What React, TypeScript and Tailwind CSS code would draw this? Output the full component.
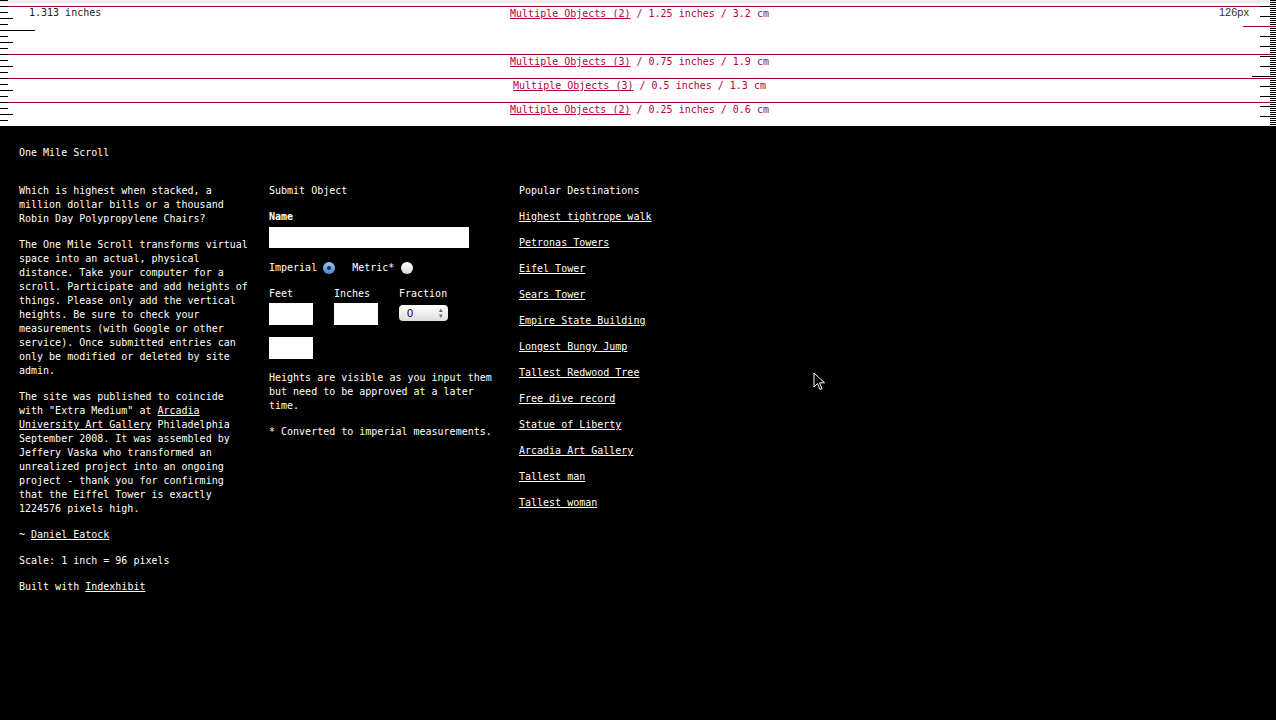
const mono = "font-['DejaVu_Sans_Mono','Liberation_Mono',monospace]";

const objects = [
  { label: 'Multiple Objects (2)', rest: ' / 1.25 inches / 3.2 cm', h: 'h-[48px]' },
  { label: 'Multiple Objects (3)', rest: ' / 0.75 inches / 1.9 cm', h: 'h-[24px]' },
  { label: 'Multiple Objects (3)', rest: ' / 0.5 inches / 1.3 cm', h: 'h-[24px]' },
  { label: 'Multiple Objects (2)', rest: ' / 0.25 inches / 0.6 cm', h: 'h-[24px]' },
];

const destinations = [
  'Highest tightrope walk',
  'Petronas Towers',
  'Eifel Tower',
  'Sears Tower',
  'Empire State Building',
  'Longest Bungy Jump',
  'Tallest Redwood Tree',
  'Free dive record',
  'Statue of Liberty',
  'Arcadia Art Gallery',
  'Tallest man',
  'Tallest woman',
];

function InchRuler() {
  const ticks = Array.from({ length: 22 }, (_, i) => i * 6);
  return (
    <div className="absolute left-0 top-0 h-full w-[40px]">
      {ticks.map((y) => (
        <div
          key={y}
          className="absolute left-0 h-px bg-black"
          style={{ top: y, width: (y - 18) % 24 === 0 ? 13 : 8 }}
        />
      ))}
      <div className="absolute left-0 top-[30px] h-px w-[35px] bg-black" />
    </div>
  );
}

function PixelRuler() {
  const small = Array.from({ length: 64 }, (_, i) => i * 2);
  const mid = Array.from({ length: 12 }, (_, i) => 6 + i * 10);
  return (
    <div className="absolute right-0 top-0 h-full w-[40px]">
      {small.map((y) => (
        <div key={y} className="absolute right-0 h-px w-[6px] bg-black" style={{ top: y }} />
      ))}
      {mid.map((y) => (
        <div
          key={'m' + y}
          className="absolute right-0 h-px bg-black"
          style={{ top: y, width: y === 76 ? 24 : 16 }}
        />
      ))}
      <div className="absolute right-0 top-[26px] h-px w-[33px] bg-[#a3002f]" />
    </div>
  );
}

function Cursor() {
  return (
    <svg className="absolute left-[813px] top-[372px]" width="14" height="20" viewBox="0 0 14 20">
      <path d="M1 1 L1 15 L4.5 11.5 L7 17.5 L9 16.6 L6.6 10.8 L11.5 10.8 Z" fill="#000" stroke="#fff" strokeWidth="1" />
    </svg>
  );
}

export default function App() {
  return (
    <div className={`relative min-h-screen w-full bg-black ${mono} text-[10px] leading-[14px]`}>
      <div className="relative h-[126px] overflow-hidden bg-white pt-[6px]">
        <div className="absolute left-0 right-0 top-0 h-[3px] bg-[#ececec]" />
        {objects.map((o, i) => (
          <div key={i} className={`${o.h} border-t border-[#a3002f] pl-[3px] text-center text-[#b8003a]`}>
            <a href="#" className="underline">{o.label}</a>
            {o.rest}
          </div>
        ))}
        <InchRuler />
        <PixelRuler />
        <div className="absolute left-[29px] top-[6px] text-[#222]">1.313 inches</div>
        <div className="absolute left-[1219px] top-[5px] font-['Liberation_Sans',sans-serif] text-[11px] text-[#333]">126px</div>
      </div>

      <div className="px-[19px] pt-[20px] text-white">
        <p>One Mile Scroll</p>

        <div className="mt-[24px] flex gap-[20px]">
          <div className="flex w-[230px] flex-col gap-[12px]">
            <p>Which is highest when stacked, a million dollar bills or a thousand Robin Day Polypropylene Chairs?</p>
            <p>
              The One Mile Scroll transforms virtual space into an actual, physical distance. Take your computer for a
              scroll. Participate and add heights of things. Please only add the vertical heights. Be sure to check your
              measurements (with Google or other service). Once submitted entries can only be modified or deleted by
              site admin.
            </p>
            <p>
              The site was published to coincide with "Extra Medium" at{' '}
              <a href="#" className="underline">Arcadia University Art Gallery</a> Philadelphia September 2008. It was
              assembled by Jeffery Vaska who transformed an unrealized project into an ongoing project - thank you for
              confirming that the Eiffel Tower is exactly 1224576 pixels high.
            </p>
            <p>
              ~ <a href="#" className="underline">Daniel Eatock</a>
            </p>
            <p>Scale: 1 inch = 96 pixels</p>
            <p>
              Built with <a href="#" className="underline">Indexhibit</a>
            </p>
          </div>

          <div className="flex w-[230px] flex-col">
            <p>Submit Object</p>
            <p className="mt-[12px] font-bold">Name</p>
            <div className="mt-[3px] h-[21px] w-[200px] bg-white" />
            <div className="mt-[13px] flex items-center">
              <span>Imperial</span>
              <span className="ml-[6px] flex h-[12px] w-[12px] items-center justify-center rounded-full bg-gradient-to-b from-[#9cc2ec] to-[#4a8ad6]">
                <span className="h-[4px] w-[4px] rounded-full bg-[#1c2f4c]" />
              </span>
              <span className="ml-[17px]">Metric*</span>
              <span className="ml-[7px] h-[12px] w-[12px] rounded-full bg-gradient-to-b from-white to-[#d9d9d9]" />
            </div>
            <div className="mt-[12px] flex gap-[21px]">
              <div className="flex flex-col">
                <span>Feet</span>
                <div className="mt-[2px] h-[22px] w-[44px] bg-white" />
              </div>
              <div className="flex flex-col">
                <span>Inches</span>
                <div className="mt-[2px] h-[22px] w-[44px] bg-white" />
              </div>
              <div className="flex flex-col">
                <span>Fraction</span>
                <div className="mt-[4px] flex h-[16px] w-[49px] items-center justify-between rounded-[4px] bg-gradient-to-b from-white to-[#dcdcdc] pl-[8px] pr-[5px] font-['Liberation_Sans',sans-serif] text-[11px] text-black">
                  <span>0</span>
                  <span className="text-[7px] leading-[6px] text-[#666]">▴<br />▾</span>
                </div>
              </div>
            </div>
            <div className="mt-[12px] h-[22px] w-[44px] bg-white" />
            <p className="mt-[12px]">Heights are visible as you input them but need to be approved at a later time.</p>
            <p className="mt-[12px]">* Converted to imperial measurements.</p>
          </div>

          <div className="flex w-[230px] flex-col gap-[12px]">
            <p>Popular Destinations</p>
            {destinations.map((d) => (
              <a key={d} href="#" className="underline">{d}</a>
            ))}
          </div>
        </div>
      </div>
      <Cursor />
    </div>
  );
}
